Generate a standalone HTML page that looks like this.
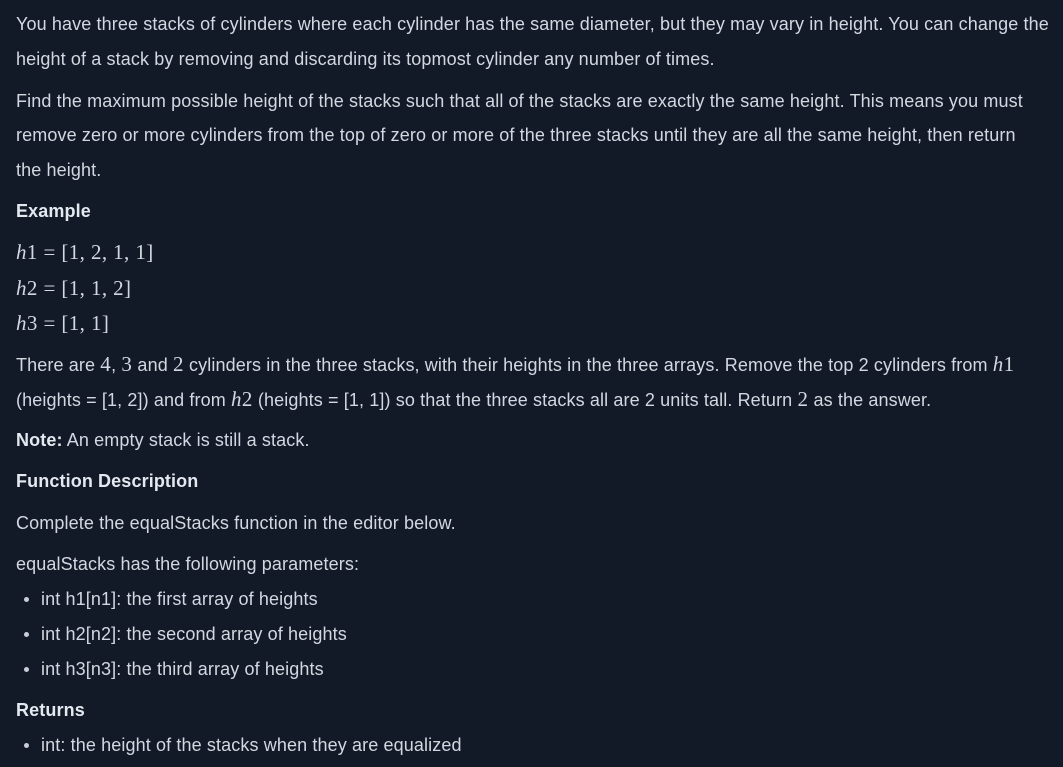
<!DOCTYPE html>
<html><head><meta charset="utf-8"><style>
html,body{margin:0;padding:0;background:#121a28;width:1063px;height:767px;overflow:hidden}
body{font-family:"Liberation Sans",sans-serif;font-size:18px;color:#d3d8e0;position:relative;letter-spacing:0.12px}
.l{position:absolute;left:16px;white-space:nowrap;line-height:24px;height:24px}
b{color:#e4e9f0}
.m{font-family:"Liberation Serif",serif;font-size:21px;letter-spacing:0.4px}
.m i{font-style:italic}
.bu{left:24px}
.bu::before{content:"";position:absolute;left:0;top:10px;width:5px;height:5px;border-radius:50%;background:#c9ced6}
.bu span{margin-left:17px}
</style></head><body>
<div class="l" style="top:12px">You have three stacks of cylinders where each cylinder has the same diameter, but they may vary in height. You can change the</div>
<div class="l" style="top:47px">height of a stack by removing and discarding its topmost cylinder any number of times.</div>
<div class="l" style="top:89px">Find the maximum possible height of the stacks such that all of the stacks are exactly the same height. This means you must</div>
<div class="l" style="top:123px">remove zero or more cylinders from the top of zero or more of the three stacks until they are all the same height, then return</div>
<div class="l" style="top:158px">the height.</div>
<div class="l" style="top:199px"><b>Example</b></div>
<div class="l m" style="top:240px"><i>h</i>1 = [1, 2, 1, 1]</div>
<div class="l m" style="top:276px"><i>h</i>2 = [1, 1, 2]</div>
<div class="l m" style="top:311px"><i>h</i>3 = [1, 1]</div>
<div class="l" style="top:352px">There are <span class="m">4</span>, <span class="m">3</span> and <span class="m">2</span> cylinders in the three stacks, with their heights in the three arrays. Remove the top 2 cylinders from <span class="m"><i>h</i>1</span></div>
<div class="l" style="top:387px">(heights = [1, 2]) and from <span class="m"><i>h</i>2</span> (heights = [1, 1]) so that the three stacks all are 2 units tall. Return <span class="m">2</span> as the answer.</div>
<div class="l" style="top:428px"><b>Note:</b> An empty stack is still a stack.</div>
<div class="l" style="top:469px"><b>Function Description</b></div>
<div class="l" style="top:511px">Complete the equalStacks function in the editor below.</div>
<div class="l" style="top:552px">equalStacks has the following parameters:</div>
<div class="l bu" style="top:587px"><span>int h1[n1]: the first array of heights</span></div>
<div class="l bu" style="top:622px"><span>int h2[n2]: the second array of heights</span></div>
<div class="l bu" style="top:657px"><span>int h3[n3]: the third array of heights</span></div>
<div class="l" style="top:698px"><b>Returns</b></div>
<div class="l bu" style="top:733px"><span>int: the height of the stacks when they are equalized</span></div>
</body></html>
